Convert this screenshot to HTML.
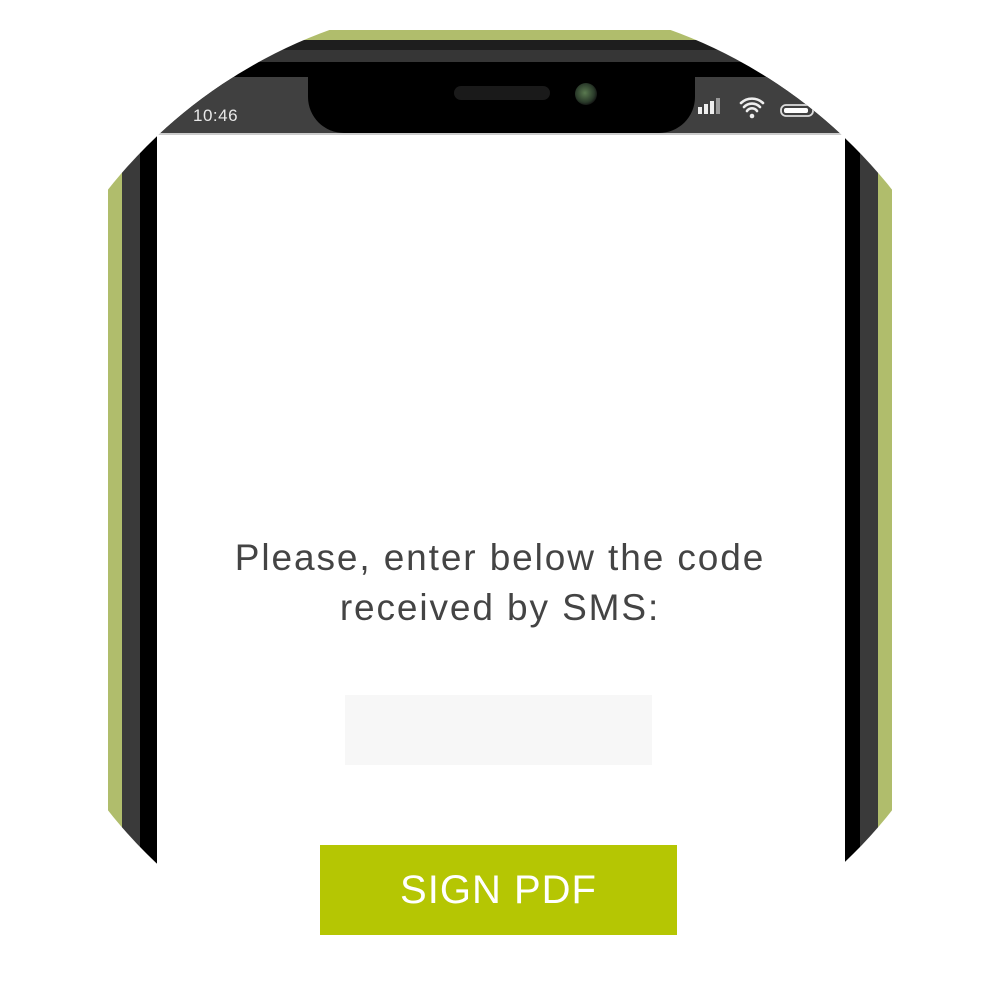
<!DOCTYPE html>
<html><head><style>
html,body{margin:0;padding:0;background:#fff;width:1000px;height:1000px;overflow:hidden}
#clip{position:absolute;left:0;top:0;width:1000px;height:1000px;border-radius:50%;overflow:hidden}
.a{position:absolute}
</style></head><body>
<div id="clip">
  <div class="a" style="left:0;top:30px;width:1000px;height:10px;background:#b0bd6c"></div>
  <div class="a" style="left:0;top:40px;width:1000px;height:10px;background:#1e1e1e"></div>
  <div class="a" style="left:0;top:50px;width:1000px;height:12px;background:#363636"></div>
  <div class="a" style="left:0;top:62px;width:1000px;height:72px;background:#000"></div>
  <div class="a" style="left:0;top:77px;width:1000px;height:56px;background:#404040"></div>
  <div class="a" style="left:308px;top:74px;width:387px;height:59px;background:#000;border-radius:0 0 36px 36px"></div>
  <div class="a" style="left:454px;top:86px;width:96px;height:14px;background:#1a1a1a;border-radius:7px"></div>
  <div class="a" style="left:575px;top:83px;width:22px;height:22px;background:radial-gradient(circle at 45% 45%,#5a7a50,#2a3a2a 55%,#111 75%);border-radius:50%"></div>
  <div class="a" style="left:193px;top:106px;color:#e8e8e8;font:17px 'Liberation Sans',sans-serif;letter-spacing:0.5px">10:46</div>
  <svg class="a" style="left:695px;top:95px" width="130" height="30">
    <rect x="3" y="12" width="4" height="7" fill="#eee"/>
    <rect x="9" y="9" width="4" height="10" fill="#eee"/>
    <rect x="15" y="6" width="4" height="13" fill="#eee"/>
    <rect x="21" y="3" width="4" height="16" fill="#999"/>
    <path d="M46 8a16 16 0 0 1 22 0M49 12a11 11 0 0 1 16 0M52 16a6 6 0 0 1 10 0" stroke="#eee" stroke-width="2.6" fill="none" stroke-linecap="round"/>
    <circle cx="57" cy="21" r="2.3" fill="#eee"/>
    <rect x="86" y="10" width="32" height="11" rx="5" fill="none" stroke="#ddd" stroke-width="1.8"/>
    <rect x="89" y="13" width="24" height="5" rx="2" fill="#fff"/>
  </svg>
  <div class="a" style="left:108px;top:130px;width:14px;height:800px;background:#b0bd6c"></div>
  <div class="a" style="left:122px;top:130px;width:18px;height:800px;background:#3a3a3a"></div>
  <div class="a" style="left:140px;top:130px;width:17px;height:800px;background:#000"></div>
  <div class="a" style="left:845px;top:130px;width:15px;height:800px;background:#000"></div>
  <div class="a" style="left:860px;top:130px;width:18px;height:800px;background:#3a3a3a"></div>
  <div class="a" style="left:878px;top:130px;width:14px;height:800px;background:#b0bd6c"></div>
  <div class="a" style="left:157px;top:133px;width:688px;height:900px;background:#fff;border-top:2px solid #ccc"></div>
</div>
<div class="a" style="left:100px;top:533px;width:800px;text-align:center;color:#444;font:37px/50px 'Liberation Sans',sans-serif;letter-spacing:1.9px">Please, enter below the code<br>received by SMS:</div>
<div class="a" style="left:345px;top:695px;width:307px;height:70px;background:#f7f7f7"></div>
<div class="a" style="left:320px;top:845px;width:357px;height:90px;background:#b5c603;color:#fff;font:40px/90px 'Liberation Sans',sans-serif;letter-spacing:1px;text-align:center">SIGN PDF</div>
</body></html>
